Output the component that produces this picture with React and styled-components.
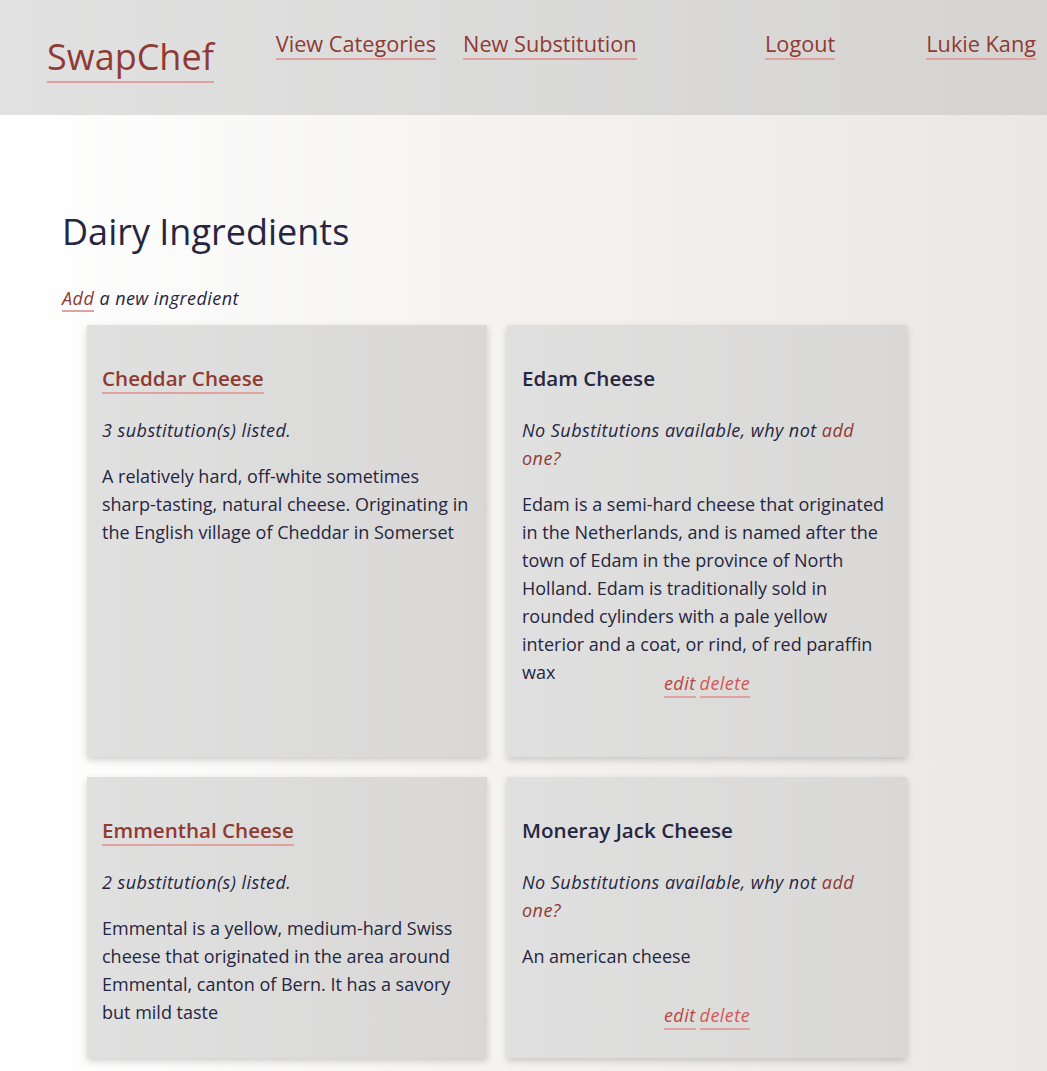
import React from 'react'
import styled, { createGlobalStyle } from 'styled-components'

const GlobalStyle = createGlobalStyle`
  body {
    margin: 0;
    font-family: 'Open Sans', 'Liberation Sans', sans-serif;
    color: #262641;
    background: linear-gradient(to right, #ffffff 0%, #f6f5f4 40%, #ebe7e4 100%);
    min-height: 100vh;
  }
`

const Header = styled.header`
  display: flex;
  align-items: flex-start;
  height: 115px;
  padding: 0 11px 0 47px;
  box-sizing: border-box;
  background: linear-gradient(to right, #e1e1e1, #d5d4d3);
`

const Logo = styled.a`
  margin-top: 32px;
  font-size: 36px;
  line-height: normal;
  color: #8f3a33;
  text-decoration: none;
  border-bottom: 2px solid #e0a29e;
`

const NavGroup = styled.nav`
  display: flex;
  gap: ${p => p.gap}px;
  margin-top: 29px;
  margin-left: ${p => (p.right ? 'auto' : '62px')};
`

const NavLink = styled.a`
  font-size: 21.7px;
  line-height: normal;
  color: #8f3a33;
  text-decoration: none;
  border-bottom: 2px solid #e0a29e;
`

const Main = styled.main`
  padding: 92px 62px 20px;
`

const Title = styled.h1`
  margin: 0 0 30px;
  font-size: 36px;
  line-height: 49px;
  font-weight: 500;
  color: #262641;
`

const Italic = styled.p`
  margin: 0 0 ${p => p.after}px;
  font-size: 18px;
  line-height: ${p => p.lh}px;
  font-style: italic;
  letter-spacing: 0.45px;
`

const TextLink = styled.a`
  color: #8f3a33;
  text-decoration: none;
  border-bottom: ${p => (p.plain ? 'none' : '2px solid #e0a29e')};
`

const Grid = styled.div`
  display: grid;
  grid-template-columns: repeat(2, 400px);
  grid-template-rows: 432px 281px;
  gap: 20px;
  margin-left: 25px;
`

const Card = styled.div`
  box-sizing: border-box;
  padding: 40px 15px 15px;
  background: linear-gradient(to right, #e0e0e0, #d9d8d7);
  box-shadow: 0 3px 7px rgba(0, 0, 0, 0.18);
`

const CardTitle = styled.h3`
  margin: 0 0 24px;
  font-size: 20.6px;
  line-height: 27px;
  font-weight: 600;
  color: #262641;
`

const TitleLink = styled.a`
  color: #8f3a33;
  text-decoration: none;
  border-bottom: 2px solid #e0a29e;
`

const Description = styled.p`
  margin: 0 0 18px;
  font-size: 18px;
  line-height: 28px;
  min-height: 43px;
  max-height: 163px;
`

const Actions = styled.div`
  display: flex;
  justify-content: center;
  gap: 4px;
  font-size: 18px;
  line-height: 28px;
  font-style: italic;
  letter-spacing: 0.45px;
`

const ActionLink = styled.a`
  color: ${p => p.color};
  text-decoration: none;
  border-bottom: 2px solid #e0a29e;
  line-height: 25px;
`

const ingredients = [
  {
    name: 'Cheddar Cheese',
    subs: 3,
    desc: 'A relatively hard, off-white sometimes sharp-tasting, natural cheese. Originating in the English village of Cheddar in Somerset',
  },
  {
    name: 'Edam Cheese',
    subs: 0,
    own: true,
    desc: 'Edam is a semi-hard cheese that originated in the Netherlands, and is named after the town of Edam in the province of North Holland. Edam is traditionally sold in rounded cylinders with a pale yellow interior and a coat, or rind, of red paraffin wax',
  },
  {
    name: 'Emmenthal Cheese',
    subs: 2,
    desc: 'Emmental is a yellow, medium-hard Swiss cheese that originated in the area around Emmental, canton of Bern. It has a savory but mild taste',
  },
  {
    name: 'Moneray Jack Cheese',
    subs: 0,
    own: true,
    desc: 'An american cheese',
  },
]

function IngredientCard({ item }) {
  return (
    <Card>
      <CardTitle>
        {item.subs > 0 ? <TitleLink href="#">{item.name}</TitleLink> : item.name}
      </CardTitle>
      {item.subs > 0 ? (
        <Italic after={18} lh={28}>{item.subs} substitution(s) listed.</Italic>
      ) : (
        <Italic after={18} lh={28}>
          No Substitutions available, why not <TextLink plain href="#">add one?</TextLink>
        </Italic>
      )}
      <Description>{item.desc}</Description>
      {item.own && (
        <Actions>
          <ActionLink href="#" color="#b9463f">edit</ActionLink>
          <ActionLink href="#" color="#d45853">delete</ActionLink>
        </Actions>
      )}
    </Card>
  )
}

export default function App() {
  return (
    <>
      <GlobalStyle />
      <Header>
        <Logo href="#">SwapChef</Logo>
        <NavGroup gap={27}>
          <NavLink href="#">View Categories</NavLink>
          <NavLink href="#">New Substitution</NavLink>
        </NavGroup>
        <NavGroup right gap={91}>
          <NavLink href="#">Logout</NavLink>
          <NavLink href="#">Lukie Kang</NavLink>
        </NavGroup>
      </Header>
      <Main>
        <Title>Dairy Ingredients</Title>
        <Italic after={14} lh={25}>
          <TextLink href="#">Add</TextLink> a new ingredient
        </Italic>
        <Grid>
          {ingredients.map(item => (
            <IngredientCard key={item.name} item={item} />
          ))}
        </Grid>
      </Main>
    </>
  )
}
